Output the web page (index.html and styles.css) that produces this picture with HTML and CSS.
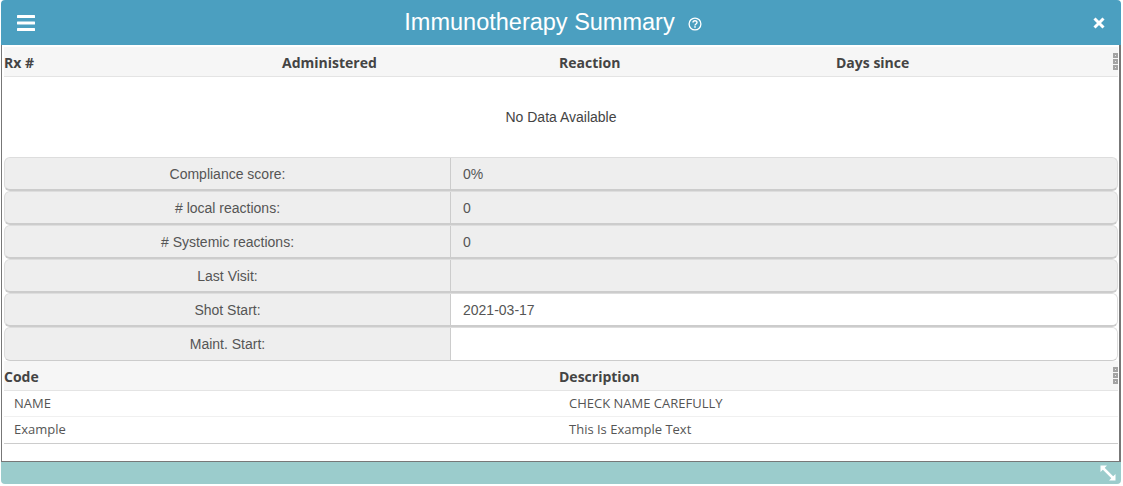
FILE: index.html
```html
<!DOCTYPE html>
<html lang="en">
<head>
    <meta charset="UTF-8">
    <title>Immunotherapy Summary</title>
    <link rel="stylesheet" href="styles.css">
</head>
<body>
    <div class="window">
        <div class="title-bar">
            <svg class="menu-icon" width="18" height="16" viewBox="0 0 18 16">
                <rect x="0" y="0" width="18" height="3" rx="0.5"/>
                <rect x="0" y="6.5" width="18" height="3" rx="0.5"/>
                <rect x="0" y="13" width="18" height="3" rx="0.5"/>
            </svg>
            <div class="title">
                <span>Immunotherapy Summary</span>
                <svg class="help-icon" width="14" height="14" viewBox="0 0 14 14">
                    <circle cx="7" cy="7" r="5.9" fill="none" stroke="#fff" stroke-width="1.3"/>
                    <path d="M5 5.6c0-1.2 1-1.9 2-1.9s2 .7 2 1.8c0 1.5-2 1.4-2 2.9" fill="none" stroke="#fff" stroke-width="1.4"/>
                    <rect x="6.2" y="9.2" width="1.6" height="1.5" fill="#fff"/>
                </svg>
            </div>
            <svg class="close-icon" width="12" height="12" viewBox="0 0 12 12">
                <path d="M1.5 1.5L10.5 10.5M10.5 1.5L1.5 10.5" stroke="#fff" stroke-width="3"/>
            </svg>
        </div>

        <div class="content">
            <!-- treatments -->
            <div class="table-head rx-cols">
                <span>Rx #</span>
                <span>Administered</span>
                <span>Reaction</span>
                <span>Days since</span>
                <div class="grip"><i></i><i></i><i></i></div>
            </div>
            <div class="no-data">No Data Available</div>

            <!-- summary fields -->
            <div class="field">
                <div class="field-label">Compliance score:</div>
                <div class="field-value">0%</div>
            </div>
            <div class="field">
                <div class="field-label"># local reactions:</div>
                <div class="field-value">0</div>
            </div>
            <div class="field">
                <div class="field-label"># Systemic reactions:</div>
                <div class="field-value">0</div>
            </div>
            <div class="field">
                <div class="field-label">Last Visit:</div>
                <div class="field-value"></div>
            </div>
            <div class="field">
                <div class="field-label">Shot Start:</div>
                <div class="field-value editable">2021-03-17</div>
            </div>
            <div class="field last">
                <div class="field-label">Maint. Start:</div>
                <div class="field-value editable"></div>
            </div>

            <!-- codes -->
            <div class="table-head code-cols">
                <span>Code</span>
                <span>Description</span>
                <div class="grip"><i></i><i></i><i></i></div>
            </div>
            <div class="code-row code-cols">
                <span>NAME</span>
                <span>CHECK NAME CAREFULLY</span>
            </div>
            <div class="code-row code-cols end">
                <span>Example</span>
                <span>This Is Example Text</span>
            </div>
        </div>

        <div class="footer">
            <svg class="resize-icon" width="16" height="16" viewBox="0 0 16 16">
                <path d="M3 3L13 13" stroke="#fff" stroke-width="2.5"/>
                <path d="M0.5 0.5H7L0.5 7Z M15.5 15.5H9L15.5 9Z" fill="#fff"/>
            </svg>
        </div>
    </div>
</body>
</html>
```

FILE: styles.css
```css
body {
    margin: 0;
    padding: 0;
    background: #fff;
    font-family: "Liberation Sans", Arial, sans-serif;
    color: #444;
}

.window {
    width: 1120px;
    height: 484px;
    margin-left: 1px;
    display: flex;
    flex-direction: column;
}

.title-bar {
    height: 45px;
    background: #4b9fc0;
    border-radius: 4px 4px 0 0;
    display: flex;
    align-items: center;
    justify-content: space-between;
    padding: 0 15px 0 16px;
}

.menu-icon {
    fill: #fff;
}

.title {
    flex: 1;
    text-align: center;
    color: #fff;
    font-size: 23.5px;
    display: flex;
    align-items: center;
    justify-content: center;
    gap: 13px;
    padding-right: 22px;
}

.help-icon {
    margin-top: 3px;
}

.close-icon {
    margin-right: 1px;
}

.content {
    flex: 1;
    border-left: 1px solid #777;
    border-right: 2px solid #777;
    border-bottom: 1px solid #777;
    padding: 2px 1px 0 2px;
}

.table-head {
    height: 29px;
    background: #f6f6f6;
    border-bottom: 1px solid #e4e4e4;
    font-family: "Open Sans", sans-serif;
    font-size: 14px;
    font-weight: 700;
    color: #444;
    line-height: 32px;
    position: relative;
}

.rx-cols {
    display: grid;
    grid-template-columns: 278px 277px 277px 1fr;
}

.code-cols {
    display: grid;
    grid-template-columns: 555px 1fr;
}

.grip {
    position: absolute;
    right: 0;
    top: 6px;
    display: flex;
    flex-direction: column;
    gap: 1px;
}

.grip i {
    width: 5px;
    height: 5px;
    box-sizing: border-box;
    border: 2px solid #a3a3a3;
    background: #e8e8e8;
}

.no-data {
    height: 80px;
    line-height: 80px;
    text-align: center;
    font-size: 14px;
    color: #444;
}

.field {
    height: 34px;
    box-sizing: border-box;
    display: flex;
    font-size: 14px;
    color: #555;
    line-height: 33px;
    border: 1px solid #ddd;
    border-bottom: 2px solid #ccc;
    border-radius: 6px;
    background: #eee;
    overflow: hidden;
}

.field.last {
    border-bottom-width: 1px;
}

.field-label {
    width: 445px;
    text-align: center;
    border-right: 1px solid #ccc;
    flex-shrink: 0;
}

.field-value {
    flex: 1;
    padding-left: 12px;
}

.field-value.editable {
    background: #fff;
}

.code-row {
    height: 26px;
    box-sizing: border-box;
    border-bottom: 1px solid #f0f0f0;
    font-family: "Open Sans", sans-serif;
    font-size: 13px;
    color: #555;
    line-height: 25px;
    padding-left: 10px;
}

.code-row.code-cols {
    grid-template-columns: 555px 1fr;
}

.code-row.end {
    height: 27px;
    border-bottom: 1px solid #ccc;
}

.footer {
    height: 22px;
    background: #9bcccc;
    border-radius: 0 0 4px 4px;
    display: flex;
    justify-content: flex-end;
    align-items: center;
    padding-right: 5px;
}
```
